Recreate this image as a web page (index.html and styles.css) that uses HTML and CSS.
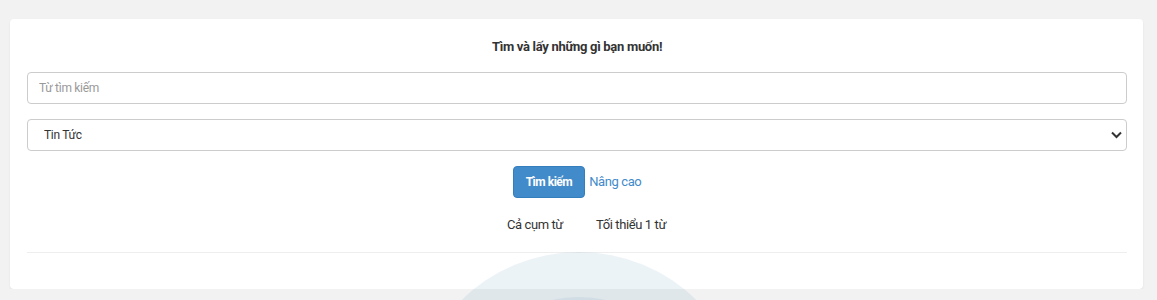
FILE: index.html
```html
<!DOCTYPE html>
<html lang="vi">
<head>
  <meta charset="UTF-8" />
  <meta name="viewport" content="width=device-width, initial-scale=1.0" />
  <title>Tìm kiếm</title>
  <link rel="stylesheet" href="styles.css">
</head>
<body>

  <!-- ===== KHUNG TIM KIEM ===== -->
  <main class="box">
    <h4 class="box-title">Tìm và lấy những gì bạn muốn!</h4>

    <form class="search-form" onsubmit="return false">
      <input class="field" type="text" placeholder="Từ tìm kiếm">

      <div class="select-wrap">
        <select class="field">
          <option>Tin Tức</option>
          <option>Văn Bản</option>
        </select>
        <svg class="caret" width="11" height="8" viewBox="0 0 11 8"><path d="M1 1.5l4.5 4.5 4.5-4.5" fill="none" stroke="#333" stroke-width="2"/></svg>
      </div>

      <div class="actions">
        <button class="btn-search" type="submit">Tìm kiếm</button>
        <a href="#" class="adv-link">Nâng cao</a>
      </div>

      <div class="modes">
        <label><input type="radio" name="mode" checked> Cả cụm từ</label>
        <label><input type="radio" name="mode"> Tối thiểu 1 từ</label>
      </div>
    </form>

    <hr class="sep">
  </main>

  <!-- vong tron loading -->
  <div class="loader"><div class="loader-inner"></div></div>

</body>
</html>
```

FILE: styles.css
```css
/* ===== NEN & FONT ===== */
body{
  margin:0;padding:19px 14px 0 10px;
  background:#f2f2f2;
  font-family:Roboto,"Liberation Sans",Arial,sans-serif;
  color:#333;font-size:13px;
  overflow:hidden;
}

/* khung */
.box{
  background:#fff;border-radius:4px;
  box-shadow:0 1px 2px rgba(0,0,0,.08);
  padding:19px 16px 36px 17px;
}
.box-title{margin:0 0 16px;text-align:center;font-size:13px;letter-spacing:-.3px;font-weight:bold;line-height:18px;color:#333;}

/* form */
.search-form{display:flex;flex-direction:column;gap:15px;}
.field{
  display:block;width:100%;box-sizing:border-box;height:32px;
  border:1px solid #ccc;border-radius:4px;background:#fff;
  font-family:inherit;font-size:12px;letter-spacing:-.3px;color:#333;padding:0 11px;
}
.field::placeholder{color:#999;}
.select-wrap{position:relative;}
.select-wrap select{appearance:none;-webkit-appearance:none;padding-left:16px;}
.caret{position:absolute;right:5px;top:12px;pointer-events:none;}

.actions{display:flex;justify-content:center;align-items:center;gap:4px;}
.btn-search{
  height:32px;padding:0 12px;border:1px solid #357ebd;border-radius:4px;
  background:#428bca;color:#fff;font-family:inherit;font-size:12px;letter-spacing:-.5px;font-weight:bold;cursor:pointer;
}
.adv-link{color:#428bca;text-decoration:none;font-size:13px;letter-spacing:-.4px;margin-top:-2px;}

.modes{display:flex;justify-content:center;gap:33px;font-size:13px;letter-spacing:-.4px;margin:4px 0 0 19px;}
.modes input{display:none;}

.sep{border:0;border-top:1px solid #eee;margin:20px 0 0;}

/* vong tron mo */
.loader{
  position:fixed;left:411px;top:252px;width:336px;height:336px;
  border-radius:50%;background:rgba(70,140,180,.1);pointer-events:none;
}
.loader-inner{
  position:absolute;left:48px;top:45px;width:240px;height:240px;
  border-radius:50%;background:rgba(70,140,180,.1);
}
```
